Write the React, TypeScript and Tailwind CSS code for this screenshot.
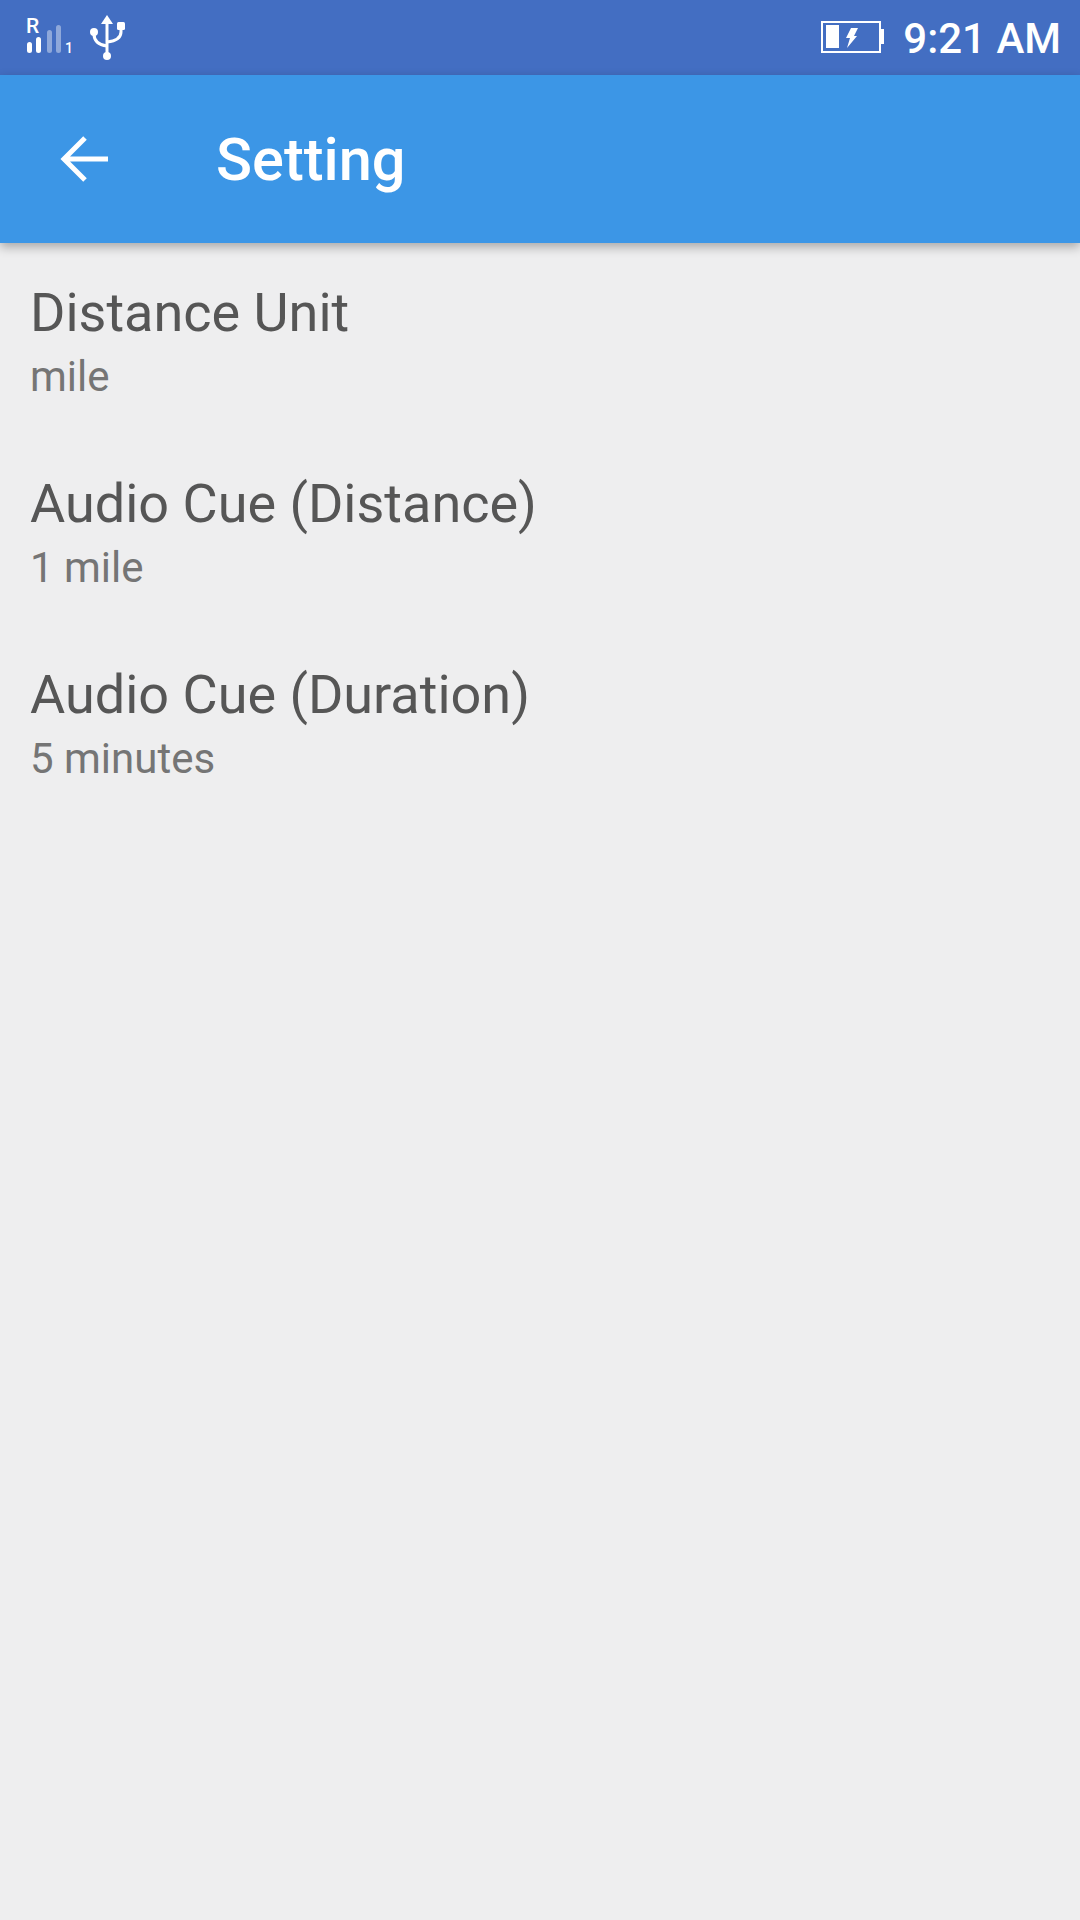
function SignalIcon() {
    return (
        <svg width="50" height="50" viewBox="0 0 50 50" className="absolute left-[26px] top-[10px]">
            <text x="0" y="23" fill="#fff" fontSize="21" fontWeight="500" fontFamily="Roboto, sans-serif">R</text>
            <rect x="1" y="32" width="5" height="11" rx="2.5" fill="#fff" />
            <rect x="10" y="27" width="5" height="16" rx="2.5" fill="#fff" />
            <rect x="21" y="20" width="5" height="23" rx="2.5" fill="#fff" fillOpacity="0.4" />
            <rect x="30" y="15" width="5" height="28" rx="2.5" fill="#fff" fillOpacity="0.4" />
            <text x="39" y="43" fill="#fff" fontSize="14" fontWeight="500" fontFamily="Roboto, sans-serif">1</text>
        </svg>
    )
}

function UsbIcon() {
    return (
        <svg width="40" height="48" viewBox="0 0 40 48" className="absolute left-[88px] top-[14px]">
            <path d="M19 1 L25 10 H13 Z" fill="#fff" />
            <path d="M19 8 V40" stroke="#fff" strokeWidth="3" fill="none" />
            <path d="M6 18 V20 C6 27 11 31 19 32" stroke="#fff" strokeWidth="3" fill="none" />
            <path d="M33 14 V18 C33 24 28 27 19 28" stroke="#fff" strokeWidth="3" fill="none" />
            <circle cx="6" cy="18" r="4" fill="#fff" />
            <rect x="29" y="8" width="8" height="8" rx="1.5" fill="#fff" />
            <circle cx="19" cy="42" r="4" fill="#fff" />
        </svg>
    )
}

function BatteryIcon() {
    return (
        <svg width="64" height="37" viewBox="0 0 64 37" className="mt-[1px]">
            <rect x="1" y="2" width="58" height="30" fill="none" stroke="#fff" strokeWidth="2" />
            <rect x="60" y="9" width="3" height="15" fill="#fff" />
            <rect x="5" y="5" width="13" height="23" fill="#fff" />
            <path d="M30 8 H37 L33 16 H36 L26 28 L29 18 H25 Z" fill="#fff" />
        </svg>
    )
}

function SettingRow({ title, value }: { title: string; value: string }) {
    return (
        <div className="h-[191px] px-[30px] pt-[33px]">
            <div className="text-[54px] leading-[68px] text-[#565656]">{title}</div>
            <div className="text-[42px] leading-[52px] mt-[4px] text-[#757575]">{value}</div>
        </div>
    )
}

export default function App() {
    return (
        <div className="w-[1080px] h-[1920px] bg-[#eeeeef] overflow-hidden font-['Roboto',sans-serif]">
            <div className="relative h-[75px] bg-[#436ec2] flex items-center justify-end pr-[19px] gap-[18px]">
                <SignalIcon />
                <UsbIcon />
                <BatteryIcon />
                <span className="text-[42px] font-medium text-white leading-none mt-[2px]">9:21 AM</span>
            </div>
            <div className="relative z-10 h-[168px] bg-[#3c96e6] flex items-center shadow-[0_4px_10px_rgba(0,0,0,0.3)]">
                <svg width="48" height="48" viewBox="0 0 48 48" className="ml-[60px]">
                    <path d="M48 24 H4 M25 3 L4 24 L25 45" fill="none" stroke="#fff" strokeWidth="5" />
                </svg>
                <span className="ml-[108px] mt-[4px] text-[59.5px] font-medium text-white leading-none">Setting</span>
            </div>
            <div className="pt-[3px]">
                <SettingRow title="Distance Unit" value="mile" />
                <SettingRow title="Audio Cue (Distance)" value="1 mile" />
                <SettingRow title="Audio Cue (Duration)" value="5 minutes" />
            </div>
        </div>
    )
}
